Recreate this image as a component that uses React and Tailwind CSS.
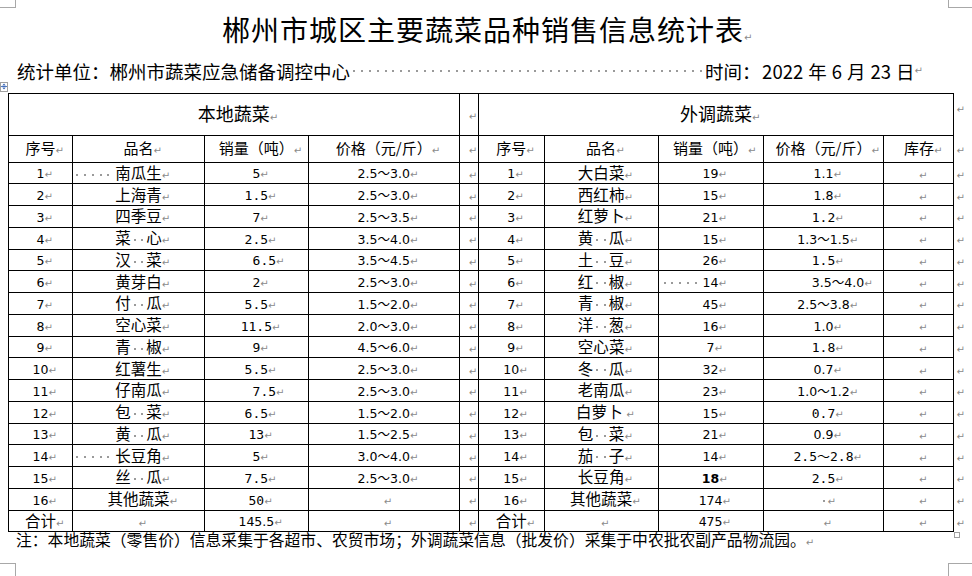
import React from 'react';

const tah = "font-['DejaVu_Sans','Noto_Sans_CJK_SC',sans-serif] text-[12.5px]";
const mono = "font-['DejaVu_Sans_Mono','Noto_Sans_CJK_SC',monospace] text-[13px]";

function Ret() {
  return (
    <span className="inline-block w-0 whitespace-nowrap text-[10px] leading-none text-[#8a8a8a] font-['DejaVu_Sans',sans-serif]">↵</span>
  );
}

function Dot() {
  return (
    <span className="inline-flex shrink-0 w-[7.75px] h-[10px] items-center justify-center align-middle">
      <span className="block w-[2px] h-[2px] bg-[#9a9a9a]" />
    </span>
  );
}

function Cell({ v }) {
  if (!v) return <Ret />;
  const [f, s, extra = ''] = v;
  const font = f === 't' ? tah : f === 'm' ? mono : f === 'b' ? tah + ' font-bold' : '';
  const lead = s.match(/^·*/)[0].length;
  const onlyDots = lead === s.length;
  const rest = onlyDots ? s : s.slice(lead);
  return (
    <>
      {lead > 0 && !onlyDots && (
        <span className="inline-flex w-0 h-[10px] justify-end items-center align-middle">
          <span className="flex shrink-0 pr-[3px]">
            {Array.from({ length: lead }).map((_, i) => <Dot key={i} />)}
          </span>
        </span>
      )}
      <span className={font + ' ' + extra}>
        {rest.split('').map((ch, i) => (ch === '·' ? <Dot key={i} /> : ch))}
      </span>
      <Ret />
    </>
  );
}

const left = [
  [['t', '1'], ['c', '·····南瓜生'], ['m', '5'], ['t', '2.5～3.0']],
  [['t', '2'], ['c', '上海青'], ['m', '1.5'], ['t', '2.5～3.0']],
  [['t', '3'], ['c', '四季豆'], ['m', '7'], ['t', '2.5～3.5']],
  [['t', '4'], ['c', '菜··心'], ['m', '2.5'], ['t', '3.5～4.0']],
  [['t', '5'], ['c', '汉··菜'], ['m', '6.5', 'pl-[16px]'], ['t', '3.5～4.5']],
  [['t', '6'], ['c', '黄芽白'], ['m', '2'], ['t', '2.5～3.0']],
  [['t', '7'], ['c', '付··瓜'], ['m', '5.5'], ['t', '1.5～2.0']],
  [['t', '8'], ['c', '空心菜'], ['m', '11.5'], ['t', '2.0～3.0']],
  [['t', '9'], ['c', '青··椒'], ['m', '9'], ['t', '4.5～6.0']],
  [['t', '10'], ['c', '红薯生'], ['m', '5.5'], ['t', '2.5～3.0']],
  [['t', '11'], ['c', '仔南瓜'], ['m', '7.5', 'pl-[16px]'], ['t', '2.5～3.0']],
  [['t', '12'], ['c', '包··菜'], ['m', '6.5'], ['t', '1.5～2.0']],
  [['t', '13'], ['c', '黄··瓜'], ['m', '13'], ['t', '1.5～2.5']],
  [['t', '14'], ['c', '·····长豆角'], ['m', '5'], ['t', '3.0～4.0']],
  [['t', '15'], ['c', '丝··瓜'], ['m', '7.5'], ['t', '2.5～3.0']],
  [['t', '16'], ['c', '其他蔬菜'], ['m', '50'], null],
  [['c', '合计'], null, ['t', '145.5'], null],
];

const right = [
  [['t', '1'], ['c', '大白菜'], ['t', '19'], ['t', '1.1']],
  [['t', '2'], ['c', '西红柿'], ['t', '15'], ['t', '1.8']],
  [['t', '3'], ['c', '红萝卜'], ['t', '21'], ['m', '1.2']],
  [['t', '4'], ['c', '黄··瓜'], ['t', '15'], ['t', '1.3～1.5']],
  [['t', '5'], ['c', '土··豆'], ['t', '26'], ['m', '1.5']],
  [['t', '6'], ['c', '红··椒'], ['t', '·····14'], ['t', '3.5～4.0', 'pl-[29px]']],
  [['t', '7'], ['c', '青··椒'], ['t', '45'], ['t', '2.5～3.8']],
  [['t', '8'], ['c', '洋··葱'], ['t', '16'], ['t', '1.0']],
  [['t', '9'], ['c', '空心菜'], ['t', '7'], ['m', '1.8']],
  [['t', '10'], ['c', '冬··瓜'], ['t', '32'], ['t', '0.7']],
  [['t', '11'], ['c', '老南瓜'], ['t', '23'], ['t', '1.0～1.2']],
  [['t', '12'], ['c', '白萝卜\u00a0'], ['t', '15'], ['m', '0.7']],
  [['t', '13'], ['c', '包··菜'], ['t', '21'], ['t', '0.9']],
  [['t', '14'], ['c', '茄··子'], ['t', '14'], ['m', '2.5～2.8']],
  [['t', '15'], ['c', '长豆角'], ['b', '18'], ['m', '2.5']],
  [['t', '16'], ['c', '其他蔬菜'], ['t', '174'], ['c', '·']],
  [['c', '合计'], null, ['t', '475'], null],
];

const td = 'border border-black p-0 text-center align-middle';

export default function App() {
  return (
    <div className="relative w-[972px] h-[576px] bg-white overflow-hidden text-black font-['Noto_Sans_CJK_SC',sans-serif]">
      {/* page corner marks */}
      <span className="absolute left-[15px] top-0 w-px h-[8px] bg-[#a8a8a8]" />
      <span className="absolute left-0 top-[7px] w-[15px] h-px bg-[#a8a8a8]" />
      <span className="absolute left-[948px] top-0 w-px h-[8px] bg-[#a8a8a8]" />
      <span className="absolute left-[948px] top-[7px] w-[24px] h-px bg-[#a8a8a8]" />
      <span className="absolute left-0 top-[563px] w-[16px] h-px bg-[#a8a8a8]" />
      <span className="absolute left-[15px] top-[563px] w-px h-[13px] bg-[#a8a8a8]" />
      <span className="absolute left-[948px] top-[563px] w-[24px] h-px bg-[#a8a8a8]" />
      <span className="absolute left-[948px] top-[563px] w-px h-[13px] bg-[#a8a8a8]" />

      <div className="pt-[15px] pr-[6px] text-center text-[28px] leading-none tracking-[1px]">
        郴州市城区主要蔬菜品种销售信息统计表<Ret />
      </div>

      <div className="mt-[19px] ml-[17px] flex items-center text-[18.5px] leading-none whitespace-nowrap">
        <span>统计单位：郴州市蔬菜应急储备调控中心</span>
        <span className="flex h-[10px] items-center">
          {Array.from({ length: 45 }).map((_, i) => (
            <span key={i} className="flex w-[7.9px] justify-center">
              <span className="block w-[2px] h-[2px] bg-[#9a9a9a]" />
            </span>
          ))}
        </span>
        <span>时间：</span>
        <span className="ml-[1.5px]">2022</span>
        <span className="ml-[5px]">年</span>
        <span className="ml-[5px]">6</span>
        <span className="ml-[5px]">月</span>
        <span className="ml-[5px]">23</span>
        <span className="ml-[5px]">日</span>
        <Ret />
      </div>

      <div className="relative mt-[12px] ml-[8px]">
        {/* table move handle */}
        <span className="absolute left-[-8px] top-[-11px] w-[8px] h-[10px] border border-[#a0a0a0] bg-white flex items-center justify-center">
          <svg width="7" height="7" viewBox="0 0 7 7" fill="none" stroke="#2f5fb3" strokeWidth="1">
            <path d="M3.5 0.5v6M0.5 3.5h6" />
            <path d="M2.5 1.5l1-1 1 1M2.5 5.5l1 1 1-1M1.5 2.5l-1 1 1 1M5.5 2.5l1 1-1 1" />
          </svg>
        </span>
        <table className="table-fixed border-collapse leading-[14px]">
          <colgroup>
            <col className="w-[64px]" />
            <col className="w-[132px]" />
            <col className="w-[104px]" />
            <col className="w-[151px]" />
            <col className="w-[19px]" />
            <col className="w-[66px]" />
            <col className="w-[114px]" />
            <col className="w-[105px]" />
            <col className="w-[121px]" />
            <col className="w-[70px]" />
            <col className="w-[18px]" />
          </colgroup>
          <tbody>
            <tr className="h-[42px]">
              <td colSpan={4} className={td + ' text-[18px]'}>本地蔬菜<Ret /></td>
              <td className={td}><Ret /></td>
              <td colSpan={5} className={td + ' text-[18px]'}>外调蔬菜<Ret /></td>
              <td className="p-0 pl-[2px] pt-[6px] align-top text-left"><Ret /></td>
            </tr>
            <tr className="h-[27px] text-[15px]">
              <td className={td}>序号<Ret /></td>
              <td className={td}>品名<Ret /></td>
              <td className={td}>销量（吨）<Ret /></td>
              <td className={td}>价格（元/斤）<Ret /></td>
              <td className={td}><Ret /></td>
              <td className={td}>序号<Ret /></td>
              <td className={td}>品名<Ret /></td>
              <td className={td}>销量（吨）<Ret /></td>
              <td className={td}>价格（元/斤）<Ret /></td>
              <td className={td}>库存<Ret /></td>
              <td className="p-0 pl-[2px] text-left"><Ret /></td>
            </tr>
            {left.map((row, r) => (
              <tr key={r} className={r === 16 ? 'h-[21px] text-[15.5px]' : 'h-[21.75px] text-[15.5px]'}>
                {row.map((v, i) => (
                  <td key={i} className={td}><Cell v={v} /></td>
                ))}
                <td className={td}><Ret /></td>
                {right[r].map((v, i) => (
                  <td key={'r' + i} className={td}><Cell v={v} /></td>
                ))}
                <td className={td}><Ret /></td>
                <td className="p-0 pl-[2px] text-left"><Ret /></td>
              </tr>
            ))}
          </tbody>
        </table>
        {/* table resize handle */}
        <span className="absolute left-[946px] top-[439px] w-[6px] h-[6px] border border-[#a0a0a0] bg-white" />
      </div>

      <div className="ml-[16px] text-[15.8px] leading-none">
        注：本地蔬菜（零售价）信息采集于各超市、农贸市场；外调蔬菜信息（批发价）采集于中农批农副产品物流园。<Ret />
      </div>
    </div>
  );
}
